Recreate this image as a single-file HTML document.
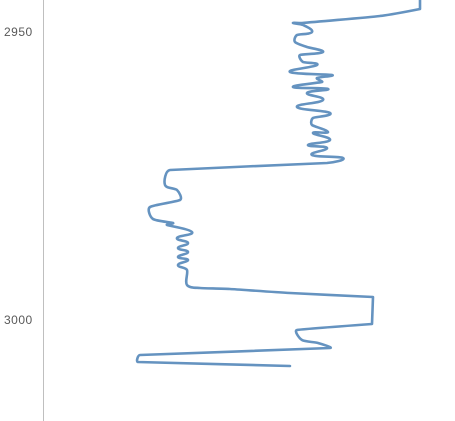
<!DOCTYPE html><html><head><style>html,body{margin:0;padding:0;background:#fff;width:455px;height:421px;overflow:hidden}
.l{position:absolute;left:4px;font:12px "Liberation Sans",sans-serif;color:#595959;letter-spacing:0.5px}</style></head><body>
<div class="l" style="top:25px">2950</div>
<div class="l" style="top:313px">3000</div>
<svg width="455" height="421" style="position:absolute;left:0;top:0">
<line x1="43.5" y1="0" x2="43.5" y2="421" stroke="#bfbfbf" stroke-width="1"/>
<path id="p" fill="none" stroke="#6593c0" stroke-width="2.6" stroke-linejoin="round" stroke-linecap="round" d="M420,0 L420,9 Q370,18 302,23 L293,23 L303,25 L312,32 L297,35 L295,42 L307,47 L323,52 L300,55 L303,62 L317,65 L290,72 L332,75 L317,78 L322,82 L293,87 L328,89 L307,93 L323,100 L297,107 L330,113 L313,118 L312,125 L328,132 L313,133 L330,140 L308,145 L327,148 L312,155 L343,158 L327,163 L170,170 L165,185 L177,190 L180,200 L150,207 L153,219 L173,223 L167,225 L192,232 L177,238 L188,243 L178,248 L188,252 L178,257 L188,260 L178,265 L187,270 L187,285 L200,288 L230,289 L290,293 L373,297 L372,324 L297,330 L302,340 L318,343 L330,348 L140,355 L138,362 L290,366"/>
</svg>
<script>
var pts=[[420,0],[420,9],[380,16],[302,23],[293,23],[303,25],[312,32],[297,35],[295,42],[307,47],[323,52],[300,55],[303,62],[317,65],[290,72],[332,75],[317,78],[322,82],[293,87],[328,89],[307,93],[323,100],[297,107],[330,113],[313,118],[312,125],[328,132],[313,133],[330,140],[308,145],[327,148],[312,155],[343,158],[327,163],[170,170],[165,185],[177,190],[180,200],[150,207],[153,219],[173,223],[167,225],[192,232],[177,238],[188,243],[178,248],[188,252],[178,257],[188,260],[178,265],[187,270],[187,285],[200,288],[230,289],[290,293],[373,297],[372,324],[297,330],[302,340],[318,343],[330,348],[140,355],[138,362],[290,366]];
function L(a,b){return Math.hypot(a[0]-b[0],a[1]-b[1]);}
function tan(i){var p0=pts[i-1]||pts[i],p1=pts[i],p2=pts[i+1]||pts[i];if(i==1||(p1[0]>=372&&p1[1]>290))return[0,0];var tx=(p2[0]-p0[0])*0.25,ty=(p2[1]-p0[1])*0.25;var m=Math.hypot(tx,ty);var lim=0.3*Math.min(i>0?L(p0,p1):1e9,i<pts.length-1?L(p1,p2):1e9);if(m>lim&&m>0){tx*=lim/m;ty*=lim/m;}return [tx,ty];}
var d="M"+pts[0];
for(var i=0;i<pts.length-1;i++){var a=tan(i),b=tan(i+1),p1=pts[i],p2=pts[i+1];
d+=" C"+(p1[0]+a[0])+","+(p1[1]+a[1])+" "+(p2[0]-b[0])+","+(p2[1]-b[1])+" "+p2[0]+","+p2[1];}
document.getElementById("p").setAttribute("d",d);
</script></body></html>
